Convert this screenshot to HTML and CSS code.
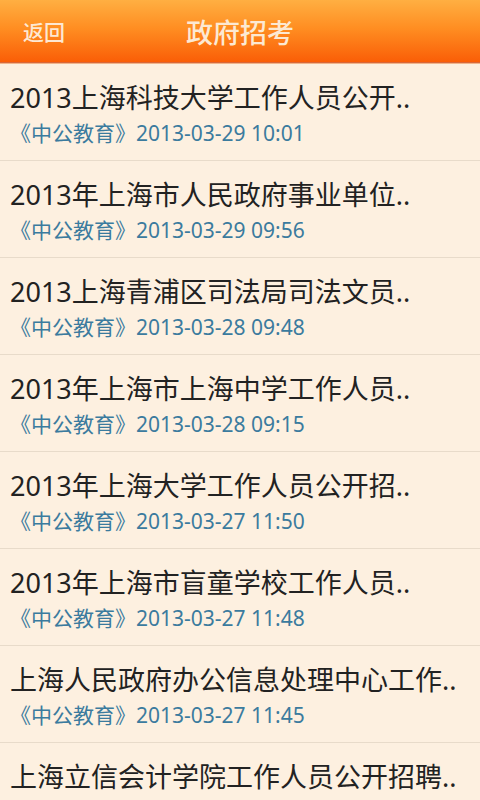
FILE: index.html
```html
<!DOCTYPE html>
<html lang="zh-CN">
<head>
  <meta charset="UTF-8" />
  <meta name="viewport" content="width=device-width, initial-scale=1.0" />
  <title>政府招考</title>
  <link rel="stylesheet" href="styles.css">
</head>
<body>
  <div class="topbar">
    <span class="back">返回</span>
    <h1 class="title">政府招考</h1>
  </div>

  <ul class="news">
    <li class="item">
      <div class="item-title">2013上海科技大学工作人员公开..</div>
      <div class="item-meta">《中公教育》2013-03-29 10:01</div>
    </li>
    <li class="item">
      <div class="item-title">2013年上海市人民政府事业单位..</div>
      <div class="item-meta">《中公教育》2013-03-29 09:56</div>
    </li>
    <li class="item">
      <div class="item-title">2013上海青浦区司法局司法文员..</div>
      <div class="item-meta">《中公教育》2013-03-28 09:48</div>
    </li>
    <li class="item">
      <div class="item-title">2013年上海市上海中学工作人员..</div>
      <div class="item-meta">《中公教育》2013-03-28 09:15</div>
    </li>
    <li class="item">
      <div class="item-title">2013年上海大学工作人员公开招..</div>
      <div class="item-meta">《中公教育》2013-03-27 11:50</div>
    </li>
    <li class="item">
      <div class="item-title">2013年上海市盲童学校工作人员..</div>
      <div class="item-meta">《中公教育》2013-03-27 11:48</div>
    </li>
    <li class="item">
      <div class="item-title">上海人民政府办公信息处理中心工作..</div>
      <div class="item-meta">《中公教育》2013-03-27 11:45</div>
    </li>
    <li class="item">
      <div class="item-title">上海立信会计学院工作人员公开招聘..</div>
    </li>
  </ul>
</body>
</html>
```

FILE: styles.css
```css
body {
  margin: 0;
  background: #fdf0e0;
  font-family: "Noto Sans", "Noto Sans CJK SC", sans-serif;
  height: 800px;
  overflow: hidden;
}

.topbar {
  height: 62px;
  display: flex;
  align-items: center;
  justify-content: center;
  position: relative;
  background: linear-gradient(#ffaf42, #ff8e22 45%, #fa5e07);
  border-bottom: 1px solid #d8683a;
  box-shadow: 0 1px 0 #f2b48a;
}

.back {
  position: absolute;
  left: 23px;
  top: 18px;
  font-size: 21px;
  line-height: 28px;
  color: #fde8d2;
  font-weight: 500;
}

.title {
  margin: 0;
  padding-top: 3px;
  font-size: 27px;
  font-weight: 500;
  color: #fce9d3;
  line-height: 34px;
}

.news {
  list-style: none;
  margin: 1px 0 0;
  padding: 0;
}

.item {
  height: 96px;
  border-bottom: 1px solid #e8dbca;
  box-sizing: border-box;
  height: 97px;
  padding: 17px 0 0 10px;
}

.item-title {
  font-size: 27px;
  line-height: 34px;
  color: #222;
  white-space: nowrap;
}

.item-meta {
  font-size: 21px;
  line-height: 26px;
  margin-top: 5px;
  color: #3b7b9e;
  white-space: nowrap;
}
```
